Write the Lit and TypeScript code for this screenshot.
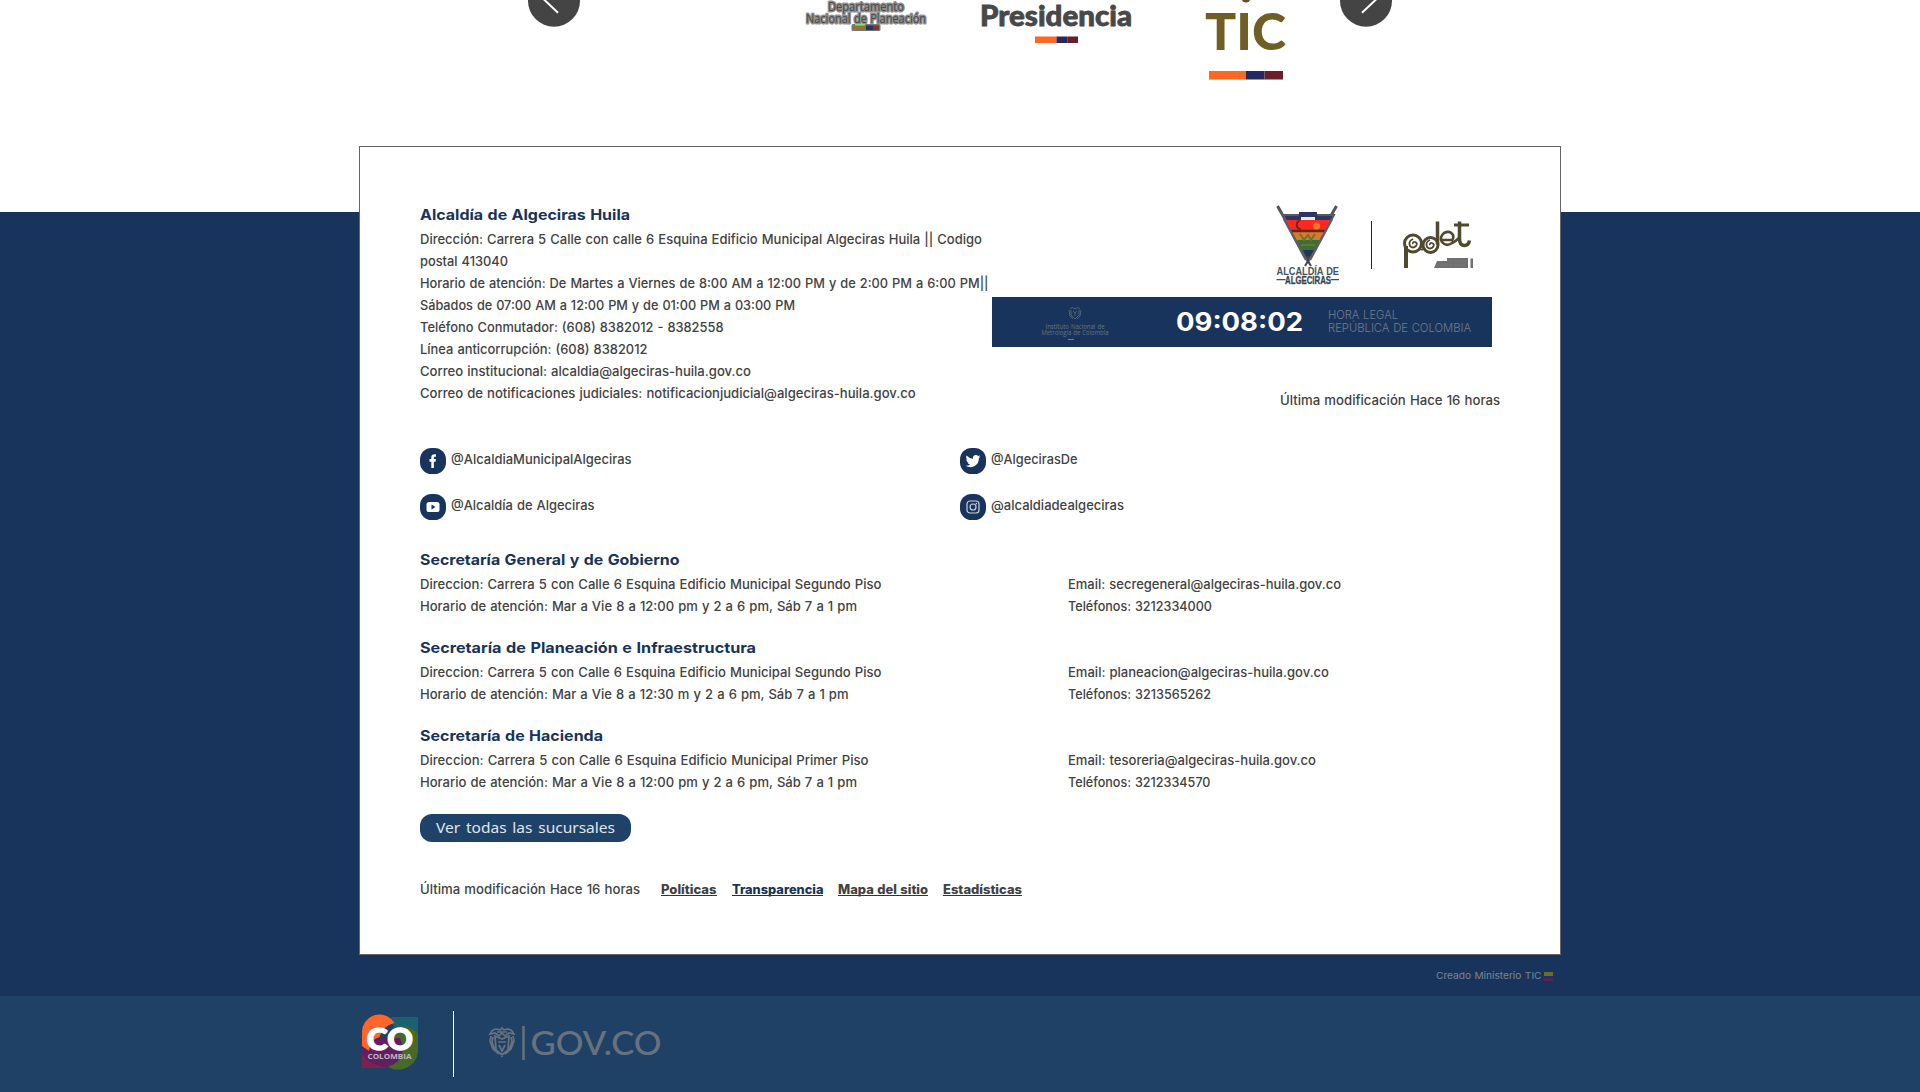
import { LitElement, html, svg, css } from "lit";
import { customElement, property } from "lit/decorators.js";

/* A single line of text set to an exact measure. */
@customElement("measured-line")
class MeasuredLine extends LitElement {
  @property() text = "";
  @property({ type: Number }) measure = 100;
  @property({ type: Number }) height = 22;
  @property({ type: Number }) baseline = 16;

  static styles = css`
    :host { display: block; }
    .line { display: block; overflow: visible; fill: currentColor; }
  `;

  render() {
    return html`<svg class="line" width=${this.measure} height=${this.height}>
      <text x="0" y=${this.baseline} textLength=${this.measure} lengthAdjust="spacingAndGlyphs">${this.text}</text>
    </svg>`;
  }
}

const line = (text: string, measure: number, height = 22, baseline = 16) =>
  html`<measured-line .text=${text} .measure=${measure} .height=${height} .baseline=${baseline}></measured-line>`;

const contact: [string, number][] = [
  ["Dirección: Carrera 5 Calle con calle 6 Esquina Edificio Municipal Algeciras Huila || Codigo", 562],
  ["postal 413040", 88],
  ["Horario de atención: De Martes a Viernes de 8:00 AM a 12:00 PM y de 2:00 PM a 6:00 PM||", 568.5],
  ["Sábados de 07:00 AM a 12:00 PM y de 01:00 PM a 03:00 PM", 375],
  ["Teléfono Conmutador: (608) 8382012 - 8382558", 303.5],
  ["Línea anticorrupción: (608) 8382012", 227.5],
  ["Correo institucional: alcaldia@algeciras-huila.gov.co", 331],
  ["Correo de notificaciones judiciales: notificacionjudicial@algeciras-huila.gov.co", 495.7],
];

const glyphs: Record<string, unknown> = {
  facebook: svg`<path d="M11.3 20v-6.3H9.5v-2.6h1.8V9.5c0-2 1.1-3.2 3.1-3.2h1.5v2.5h-1c-.8 0-1 .4-1 1.1v1.2h2l-.3 2.6h-1.7V20z" fill="#fff"/>`,
  twitter: svg`<path transform="translate(5.6 5.6) scale(.62)" d="M24 4.6a10 10 0 0 1-2.8.8 5 5 0 0 0 2.1-2.7 10 10 0 0 1-3.1 1.2A4.9 4.9 0 0 0 11.8 8.4 14 14 0 0 1 1.7 3.2a4.9 4.9 0 0 0 1.5 6.5 5 5 0 0 1-2.2-.6c0 2.3 1.6 4.4 3.9 4.9a5 5 0 0 1-2.2.1 4.9 4.9 0 0 0 4.6 3.4A9.9 9.9 0 0 1 0 19.5 14 14 0 0 0 21.5 7.1 10 10 0 0 0 24 4.6z" fill="#fff"/>`,
  youtube: svg`<rect x="6.5" y="8" width="13" height="10" rx="2.6" fill="#fff"/><path d="M11.5 10.6l4 2.4-4 2.4z" fill="#19345c"/>`,
  instagram: svg`<g fill="none" stroke="#c9d1dc" stroke-width="1.2"><rect x="7" y="7" width="12" height="12" rx="3"/><circle cx="13" cy="13" r="3"/></g><circle cx="16.4" cy="9.6" r=".8" fill="#c9d1dc"/>`,
};

const socials: [string, string, number][] = [
  ["facebook", "@AlcaldiaMunicipalAlgeciras", 180.5],
  ["twitter", "@AlgecirasDe", 86.5],
  ["youtube", "@Alcaldía de Algeciras", 143.5],
  ["instagram", "@alcaldiadealgeciras", 133],
];

const branches: { name: [string, number]; rows: [string, number, string, number][] }[] = [
  {
    name: ["Secretaría General y de Gobierno", 259.5],
    rows: [
      ["Direccion: Carrera 5 con Calle 6 Esquina Edificio Municipal Segundo Piso", 461.5, "Email: secregeneral@algeciras-huila.gov.co", 273],
      ["Horario de atención: Mar a Vie 8 a 12:00 pm y 2 a 6 pm, Sáb 7 a 1 pm", 437, "Teléfonos: 3212334000", 144],
    ],
  },
  {
    name: ["Secretaría de Planeación e Infraestructura", 336],
    rows: [
      ["Direccion: Carrera 5 con Calle 6 Esquina Edificio Municipal Segundo Piso", 461.5, "Email: planeacion@algeciras-huila.gov.co", 261],
      ["Horario de atención: Mar a Vie 8 a 12:30 m y 2 a 6 pm, Sáb 7 a 1 pm", 428.5, "Teléfonos: 3213565262", 143],
    ],
  },
  {
    name: ["Secretaría de Hacienda", 183],
    rows: [
      ["Direccion: Carrera 5 con Calle 6 Esquina Edificio Municipal Primer Piso", 448.5, "Email: tesoreria@algeciras-huila.gov.co", 248],
      ["Horario de atención: Mar a Vie 8 a 12:00 pm y 2 a 6 pm, Sáb 7 a 1 pm", 437, "Teléfonos: 3212334570", 142.5],
    ],
  },
];

const links: [string, number, string][] = [
  ["Políticas", 55.5, "link"],
  ["Transparencia", 91.5, "link link-active"],
  ["Mapa del sitio", 90, "link"],
  ["Estadísticas", 79, "link"],
];

@customElement("app-root")
class AppRoot extends LitElement {
  static styles = css`
    :host { display: block; height: 1092px; overflow: hidden; background: #fff; color: #424242; font: 500 13px Inter, "Liberation Sans", sans-serif; word-spacing: 0.6px; }
    svg { display: block; flex: none; overflow: visible; }
    .carousel { display: flex; height: 212px; padding-left: 528px; align-items: flex-start; overflow: hidden; box-sizing: border-box; }
    .dnp { margin-left: 225px; }
    .presidencia { margin-left: 54px; }
    .tic { margin-left: 74px; }
    .next { margin-left: 54px; }
    .dnp-text { font: 500 12.5px "Open Sans", sans-serif; fill: #4a4a4a; stroke: #8e8e8e; stroke-width: 3px; paint-order: stroke; stroke-linejoin: round; }
    .presi-text { font: 900 28px Lato, sans-serif; fill: #484848; stroke: #484848; stroke-width: 0.8px; }
    .tic-text { font: 900 51px Lato, sans-serif; fill: #6f5f25; }
    .band { background: #19345c; height: 784px; display: flex; flex-direction: column; align-items: center; }
    .card { box-sizing: border-box; flex: none; width: 1202px; height: 809px; margin-top: -66px; background: #fff; border: 1px solid #666; padding: 57px 60px 0; }
    .top { display: grid; grid-template-columns: 572px 508px; height: 244px; }
    .title { color: #17335a; font-weight: 750; font-size: 14.5px; }
    .aside { display: flex; flex-direction: column; }
    .logos { display: flex; height: 93px; padding-left: 284px; }
    .divider { width: 1px; height: 48px; background: #222; margin: 17px 30px 0 32px; }
    .caption { font: 600 11.5px "Liberation Sans", sans-serif; fill: #47545c; }
    .caption-bold { font-weight: 700; fill: #263a50; stroke: #55606a; stroke-width: 0.4px; }
    .clock { display: flex; width: 500px; height: 50px; background: #19345c; }
    .inst { margin-left: 49px; }
    .inst-text { font: 400 6.2px "Open Sans", sans-serif; fill: #66757c; }
    .time { margin-left: 67px; color: #fff; font-weight: 700; font-size: 25px; }
    .legal { margin-left: 25px; padding-top: 6px; color: #727b88; font: 300 12.3px Inter, sans-serif; }
    .updated { margin-top: 42px; align-self: flex-end; }
    .socials { display: grid; grid-template-columns: 540px 540px; row-gap: 20px; }
    .social { display: flex; gap: 5px; height: 26px; }
    .branches { display: grid; row-gap: 20px; margin-top: 29px; }
    .row { display: grid; grid-template-columns: 648px 1fr; }
    .button { display: block; width: 211px; height: 28px; margin: 21px 0 0; padding: 0 0 0 16px; border: 0; border-radius: 12px; background: #1f4268; color: #e0e5eb; font: 400 13.6px "Noto Sans", sans-serif; word-spacing: 1.5px; }
    .meta { display: flex; margin-top: 36px; }
    .links { display: flex; gap: 15px; margin-left: 21px; }
    .link { color: #424242; font-weight: 800; font-size: 12.5px; height: 18px; border-bottom: 1px solid #333; box-sizing: border-box; }
    .link-active { color: #17335a; border-color: #17335a; }
    .credit { display: flex; width: 1202px; height: 41px; justify-content: flex-end; color: #7c8491; font: 400 9.3px Inter, sans-serif; }
    .flag { margin: 17px 8px 0 3px; }
    .gov { display: flex; height: 96px; background: #1f4166; padding-left: 361px; box-sizing: border-box; }
    .co { margin-top: 18px; }
    .co-text { font: 900 31px Lato, sans-serif; fill: #fff; stroke: #fff; stroke-width: 1.4px; }
    .co-small { font: 700 6.5px "Open Sans", sans-serif; fill: #c0b4c2; }
    .gov-line { width: 1px; height: 66px; background: #fff; margin: 15px 34px 0 35px; }
    .gov-logo { margin-top: 28px; }
    .gov-text { font: 500 33.5px Lato, sans-serif; fill: #69727c; }
  `;

  private tricolor(x: number, y: number, w: number, h: number) {
    return svg`<rect x=${x} y=${y} width=${w * 0.5} height=${h} fill="#ff661f"/>
      <rect x=${x + w * 0.5} y=${y} width=${w * 0.25} height=${h} fill="#262960"/>
      <rect x=${x + w * 0.75} y=${y} width=${w * 0.25} height=${h} fill="#6b1e27"/>`;
  }

  private carousel() {
    return html`<div class="carousel">
      <svg width="52" height="27"><circle cx="26" cy=".7" r="26" fill="#444"/><path d="M29.5 -12L16.5 0L30 12.7" fill="none" stroke="#fff" stroke-width="2"/></svg>
      <svg class="dnp" width="122" height="32">
        <text class="dnp-text" x="23" y="10.5" textLength="76" lengthAdjust="spacingAndGlyphs">Departamento</text>
        <text class="dnp-text" x="1" y="22.5" textLength="120" lengthAdjust="spacingAndGlyphs">Nacional de Planeación</text>
        <rect x="46.5" y="24" width="29" height="7" rx="1.5" fill="#777"/>
        <rect x="48" y="25.5" width="13" height="4.5" fill="#91752f"/><rect x="61" y="25.5" width="7" height="4.5" fill="#28365c"/><rect x="68" y="25.5" width="6" height="4.5" fill="#77353c"/>
        <rect x="50" y="24" width="10" height="1.5" fill="#86dd86"/>
      </svg>
      <svg class="presidencia" width="151" height="44">
        <text class="presi-text" x="-1" y="25.7" textLength="152" lengthAdjust="spacingAndGlyphs">Presidencia</text>
        ${this.tricolor(54, 36.5, 43, 6.5)}
      </svg>
      <svg class="tic" width="80" height="82">
        <circle cx="40" cy="-2" r="4.5" fill="#6b4a2c"/>
        <text class="tic-text" x="-1" y="50" textLength="81" lengthAdjust="spacingAndGlyphs">TIC</text>
        ${this.tricolor(3, 71, 74, 8.5)}
      </svg>
      <svg class="next" width="52" height="27"><circle cx="26" cy=".7" r="26" fill="#444"/><path d="M22.5 -12L35.5 0L22 12.7" fill="none" stroke="#fff" stroke-width="2"/></svg>
    </div>`;
  }

  private crest() {
    return html`<svg width="63" height="93" viewBox="1276 204 63 93">
      <path d="M1277.5 206l8 14M1336.5 206l-8 14" stroke="#555" stroke-width="3"/>
      <path d="M1283 215h51l-26 47z" fill="#2c3763" stroke="#555a60" stroke-width="2"/>
      <path d="M1286 220h45l-6 12h-33z" fill="#ff2722"/>
      <path d="M1292 231.5h33l-5 9.5h-23z" fill="#dc7928"/>
      <path d="M1297 240h23l-6 11h-11z" fill="#397038"/>
      <path d="M1303 250h11l-6 10z" fill="#26345d"/>
      <path d="M1291 231h35" stroke="#672426" stroke-width="2.5"/>
      <path d="M1300 220c-5 3-4 8 1 10" fill="none" stroke="#722426" stroke-width="2"/>
      <circle cx="1316.5" cy="226" r="3.5" fill="#f17b23"/>
      <path d="M1300 234l4 6 4-5 3 5 4-6M1301 245h14" fill="none" stroke="#69752a" stroke-width="2"/>
      <path d="M1299 215v-3h18v3l3 3h-24z" fill="#293665"/><rect x="1301" y="217" width="14" height="3" fill="#e8eaf0"/>
      <path d="M1284 219l22 41M1332 219l-22 41" stroke="#5b5f63" stroke-width="2.4"/>
      <path d="M1308 256v5l-3 5M1308 261l3 5" stroke="#41464f" stroke-width="2" fill="none"/>
      <text class="caption" x="1276.5" y="275" textLength="62.5" lengthAdjust="spacingAndGlyphs">ALCALDÍA DE</text>
      <text class="caption caption-bold" x="1285" y="283.5" textLength="46" lengthAdjust="spacingAndGlyphs">ALGECIRAS</text>
      <path d="M1276.5 279.7h9M1330.5 279.7h8.5" stroke="#41505a" stroke-width="1.2"/>
    </svg>`;
  }

  private pdet() {
    return html`<svg width="72" height="93" viewBox="1401 204 72 93">
      <g fill="none" stroke="#4f4a2e">
        <path d="M1405 268v-22" stroke-width="4"/>
        <path d="M1436.500 221.500v23" stroke-width="3.5"/>
        <path d="M1458.500 221.500v17q0 7 5 7 4 0 5-5" stroke-width="3.5"/>
        <path d="M1453 225h15" stroke-width="3"/>
        <circle cx="1412" cy="243.500" r="8.5" stroke-width="3"/>
        <circle cx="1429.500" cy="245" r="7.5" stroke-width="3"/>
        <path d="M1441 240h10q2-2 1-5-3-5-9-2-5 4-2 9 4 5 10 1 4-2 7-5" stroke-width="2.6"/>
        <path d="M1412 244a1.500 1.500 0 0 1 2-2q3 1 1 4-3 3-6 0-2-5 3-7M1429 245a1.500 1.500 0 0 1 2-2q3 1 1 4-3 3-6 0-2-5 3-7M1419 249q3 2 4-2" stroke-width="1.8"/>
      </g>
      <path d="M1433 268l3-7h10v-3h21v10zM1469.500 258.500h2.500v9.500h-2.500z" fill="#707070"/>
      <path d="M1439 265h26M1448 261h17" stroke="#858585" stroke-width=".6" stroke-dasharray="3 1.5"/>
    </svg>`;
  }

  render() {
    return html`${this.carousel()}
      <div class="band">
        <main class="card">
          <section class="top">
            <div>
              <div class="title">${line("Alcaldía de Algeciras Huila", 210, 24)}</div>
              ${contact.map(([t, w]) => line(t, w))}
            </div>
            <div class="aside">
              <div class="logos">${this.crest()}<div class="divider"></div>${this.pdet()}</div>
              <div class="clock">
                <svg class="inst" width="68" height="50">
                  <g fill="none" stroke="#576a74" stroke-width=".9"><path d="M29 12q2-3 5 0 3-3 5 0M30 13v5l4 4 4-4v-5M32 14l2 2 2-2M34 16v3M28 13l1 6 3 3M40 13l-1 6-3 3"/></g>
                  <text class="inst-text" x="4.5" y="31.5" textLength="59" lengthAdjust="spacingAndGlyphs">Instituto Nacional de</text>
                  <text class="inst-text" x=".5" y="38" textLength="67" lengthAdjust="spacingAndGlyphs">Metrología de Colombia</text>
                  <path d="M27 42.5h6" stroke="#7c8069"/><path d="M33 42.5h6" stroke="#162746"/>
                </svg>
                <div class="time">${line("09:08:02", 127, 50, 33.5)}</div>
                <div class="legal">${line("HORA LEGAL", 70, 13, 15.6)}${line("REPÚBLICA DE COLOMBIA", 143, 13, 15.6)}</div>
              </div>
              <div class="updated">${line("Última modificación Hace 16 horas", 220)}</div>
            </div>
          </section>
          <section class="socials">
            ${socials.map(([icon, name, w]) => html`<div class="social">
              <svg width="26" height="26"><rect width="26" height="26" rx="11.5" fill="#19345c"/>${glyphs[icon]}</svg>
              ${line(name, w, 26, 16)}
            </div>`)}
          </section>
          <section class="branches">
            ${branches.map((b) => html`<article>
              <div class="title">${line(b.name[0], b.name[1], 24)}</div>
              ${b.rows.map(([l, lw, r, rw]) => html`<div class="row">${line(l, lw)}${line(r, rw)}</div>`)}
            </article>`)}
          </section>
          <button class="button">${line("Ver todas las sucursales", 179, 28, 19.4)}</button>
          <div class="meta">
            ${line("Última modificación Hace 16 horas", 220)}
            <nav class="links">${links.map(([t, w, c]) => html`<a class=${c}>${line(t, w, 17, 16)}</a>`)}</nav>
          </div>
        </main>
        <div class="credit">
          ${line("Creado Ministerio TIC", 105.5, 41, 24.3)}
          <svg class="flag" width="9" height="10"><rect width="9" height="4" fill="#6c6d22"/><rect y="4" width="9" height="2.5" fill="#20305c"/><rect y="6.5" width="9" height="2.5" fill="#60204a"/></svg>
        </div>
      </div>
      <footer class="gov">
        <svg class="co" width="57" height="57">
          <path d="M30 3h27v34H40z" fill="#1c6170"/>
          <path d="M57 20v17a20 19.500 0 0 1-30 16V20a18 17 0 0 1 30 0z" fill="#486a28"/>
          <path d="M1 24h38c6 14 1 23-8 27q-5 3-10 3H1z" fill="#5f1f60"/>
          <path d="M1 40l7 8 17 6H1z" fill="#80204f"/>
          <path d="M1 32V19a17.500 17.500 0 0 1 32.500-10q-12 3-15 14-9 2-10.500 14z" fill="#ff6528"/>
          <text class="co-text" x="5.8" y="35.8" textLength="46" lengthAdjust="spacingAndGlyphs">CO</text>
          <text class="co-small" x="6.5" y="45.3" textLength="44" lengthAdjust="spacingAndGlyphs">COLOMBIA</text>
        </svg>
        <div class="gov-line"></div>
        <svg class="gov-logo" width="175" height="40" viewBox="488 1024 175 40">
          <g fill="none" stroke="#69727c" stroke-width="1.7">
            <path d="M490 1034q3-7 10-4l2-2 2 2q7-3 10 4l-5-1-4 3-3-3-3 3-4-3z"/>
            <path d="M495 1036l1 14 6 5 6-5 1-14-7 3zM498 1042h8M499 1045l3 6 3-6M491 1036l-1 5 3 8 6 5M513 1036l1 5-3 8-6 5M493 1037l-1 5 3 8M511 1037l1 5-3 8M502 1053v4M497 1032h10"/>
          </g>
          <path d="M523.5 1026v34" stroke="#69727c" stroke-width="2.5"/>
          <text class="gov-text" x="530.5" y="1055" textLength="131" lengthAdjust="spacingAndGlyphs">GOV.CO</text>
        </svg>
      </footer>`;
  }
}
